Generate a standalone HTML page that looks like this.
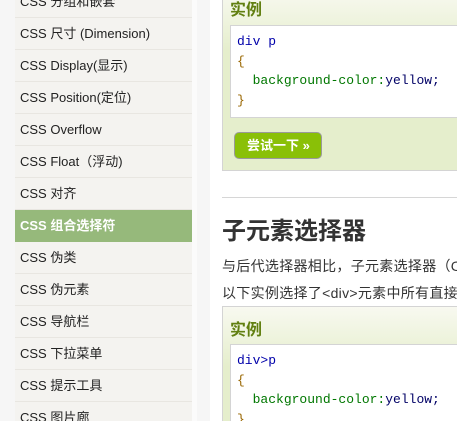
<!DOCTYPE html>
<html style="overflow:hidden"><head><meta charset="utf-8"><style>
*{margin:0;padding:0;box-sizing:border-box}
html,body{width:457px;height:421px;overflow:hidden}
body{background:#f6f6f6;font-family:"Liberation Sans","Noto Sans CJK SC",sans-serif;position:relative}
#side{position:absolute;left:15px;top:-14px;width:177px;background:#f4f3f0}
#side div{height:32px;line-height:31px;border-bottom:1px solid #e8e6e1;padding-left:5px;font-size:13px;color:#222}
#side div.a{background:#96b97b;color:#fff;font-weight:bold;border-bottom-color:#96b97b}
#wb{position:absolute;left:192px;top:0;width:5px;height:421px;background:#fbfbfb}
#main{position:absolute;left:210px;top:0;width:247px;height:421px;background:#fff;overflow:hidden}
.ex{position:absolute;left:12px;width:260px;border:1px solid #d4d4d4;background:linear-gradient(#f8f9f0,#e5eecc 60px,#e5eecc)}
.ex h3{position:absolute;left:7px;font-size:16px;color:#617f10;font-weight:bold}
.code{position:absolute;left:7px;width:250px;background:#fff;border:1px solid #d4d4d4;font-family:"Liberation Mono","DejaVu Sans Mono",monospace;font-size:13px;line-height:19.5px;padding:6px 0 0 6px;color:#000}
.k{color:#00a}.b{color:#960}.p{color:#070}.v{color:#006}
.btn{position:absolute;left:11px;top:141px;width:88px;height:27px;background:#8ac007;border:1px solid #9a9a9a;border-radius:5px;color:#fff;font-weight:bold;font-size:13px;line-height:25px;padding-left:12px}
hr{position:absolute;left:12px;top:197px;width:240px;border:0;border-top:1px solid #d6d6d6}
h2{position:absolute;left:12px;top:211px;font-size:24px;color:#333;font-weight:bold;white-space:nowrap}
p{position:absolute;left:12px;font-size:14px;color:#333;white-space:nowrap;letter-spacing:0.3px}
</style></head><body>
<div id="side">
<div>CSS 分组和嵌套</div><div>CSS 尺寸 (Dimension)</div><div>CSS Display(显示)</div><div>CSS Position(定位)</div><div>CSS Overflow</div><div>CSS Float（浮动)</div><div>CSS 对齐</div><div class="a">CSS 组合选择符</div><div>CSS 伪类</div><div>CSS 伪元素</div><div>CSS 导航栏</div><div>CSS 下拉菜单</div><div>CSS 提示工具</div><div>CSS 图片廊</div>
</div>
<div id="wb"></div>
<div id="main">
<div class="ex" style="top:-10px;height:181px">
<h3 style="top:5px">实例</h3>
<div class="code" style="top:34px;height:93px"><span class="k">div p</span><br><span class="b">{</span><br>&nbsp;&nbsp;<span class="p">background-color:</span><span class="v">yellow;</span><br><span class="b">}</span></div>
<div class="btn">尝试一下 »</div>
</div>
<hr>
<h2>子元素选择器</h2>
<p style="top:256px">与后代选择器相比，子元素选择器（Child selectors）</p>
<p style="top:283px">以下实例选择了&lt;div&gt;元素中所有直接子元素</p>
<div class="ex" style="top:306px;height:130px">
<h3 style="top:9px">实例</h3>
<div class="code" style="top:37px;height:100px"><span class="k">div&gt;p</span><br><span class="b">{</span><br>&nbsp;&nbsp;<span class="p">background-color:</span><span class="v">yellow;</span><br><span class="b">}</span></div>
</div>
</div>
</body></html>
